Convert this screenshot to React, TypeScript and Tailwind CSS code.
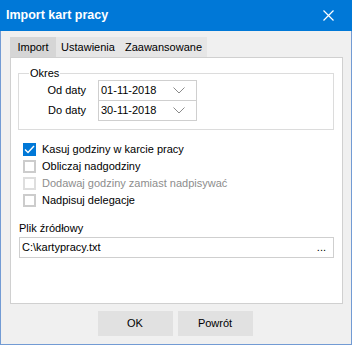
import React from "react";

const font = { fontFamily: '"Liberation Sans", Arial, sans-serif' };

function Chevron() {
  return (
    <svg width="12" height="7" viewBox="0 0 12 7" className="shrink-0" aria-hidden="true">
      <path d="M0.5 0.5L6 6L11.5 0.5" fill="none" stroke="#8a8a8a" strokeWidth="1" />
    </svg>
  );
}

function DateRow({ label, value, first }: { label: string; value: string; first?: boolean }) {
  return (
    <div className={`flex items-center ${first ? "" : "-mt-px"}`}>
      <span className="w-[67px] pr-0 text-right text-[#000]">{label}</span>
      <div className="ml-[12px] flex h-[21px] w-[99px] items-center justify-between border border-[#cfcfcf] bg-white pl-[2px] pr-[11px]">
        <span>{value}</span>
        <Chevron />
      </div>
    </div>
  );
}

function Check({ label, checked, disabled }: { label: string; checked?: boolean; disabled?: boolean }) {
  return (
    <div className="flex h-[17px] items-center">
      {checked ? (
        <div className="flex h-[13px] w-[13px] items-center justify-center bg-[#0078d7]">
          <svg width="11" height="9" viewBox="0 0 11 9" aria-hidden="true">
            <path d="M1 4.5L4 7.5L10 1" fill="none" stroke="#fff" strokeWidth="1.4" />
          </svg>
        </div>
      ) : (
        <div
          className={`h-[13px] w-[13px] border-2 bg-white ${disabled ? "border-[#dedede]" : "border-[#cccccc]"}`}
        />
      )}
      <span className={`ml-[6px] ${disabled ? "text-[#8d8d8d]" : "text-black"}`}>{label}</span>
    </div>
  );
}

export default function App() {
  return (
    <div className="flex h-[345px] w-[352px] flex-col text-[11px] text-black" style={font}>
      {/* Title bar */}
      <div className="flex h-[31px] shrink-0 items-center justify-between bg-[#0078d7] pl-[6px] pr-[18px] text-white">
        <span className="text-[12.5px] font-bold">Import kart pracy</span>
        <svg width="11" height="11" viewBox="0 0 11 11" aria-hidden="true">
          <path d="M0.5 0.5L10.5 10.5M10.5 0.5L0.5 10.5" stroke="#fff" strokeWidth="1.2" />
        </svg>
      </div>

      {/* Body */}
      <div className="flex flex-1 flex-col border-x border-b border-[#729bd4] bg-[#f0f0f0] pl-[9px] pr-[8px] pt-[6px] pb-[8px]">
        {/* Tabs */}
        <div className="flex h-[20px]">
          <div className="flex w-[46px] items-center justify-center bg-[#d6d6d6]">Import</div>
          <div className="flex w-[64px] items-center justify-center bg-[#e6e6e6]">Ustawienia</div>
          <div className="flex w-[87px] items-center justify-center bg-[#e6e6e6]">Zaawansowane</div>
        </div>

        {/* Panel */}
        <div className="flex h-[247px] flex-col border border-[#d0d0d0] bg-white">
          {/* Okres group */}
          <div className="relative ml-[7px] mr-[8px] mt-[15px] flex h-[57px] flex-col border border-[#dcdcdc] pt-[6px]">
            <span className="absolute -top-[8px] left-[10px] bg-white px-px leading-[14px]">Okres</span>
            <DateRow label="Od daty" value="01-11-2018" first />
            <DateRow label="Do daty" value="30-11-2018" />
          </div>

          {/* Checkboxes */}
          <div className="ml-[12px] mt-[11px] flex flex-col">
            <Check label="Kasuj godziny w karcie pracy" checked />
            <Check label="Obliczaj nadgodziny" />
            <Check label="Dodawaj godziny zamiast nadpisywać" disabled />
            <Check label="Nadpisuj delegacje" />
          </div>

          {/* Source file */}
          <div className="ml-[8px] mr-[8px] mt-[12px] flex flex-col">
            <span className="leading-[15px]">Plik źródłowy</span>
            <div className="mt-[1px] flex h-[21px] items-center justify-between border border-[#cfcfcf] bg-white pl-[2px] pr-[7px]">
              <span>C:\kartypracy.txt</span>
              <span>...</span>
            </div>
          </div>
        </div>

        {/* Buttons */}
        <div className="mt-[7px] flex justify-center gap-[5px] pr-[3px]">
          <button type="button" className="h-[25px] w-[75px] bg-[#e1e1e1]">
            OK
          </button>
          <button type="button" className="h-[25px] w-[75px] bg-[#e1e1e1]">
            Powrót
          </button>
        </div>
      </div>
    </div>
  );
}
